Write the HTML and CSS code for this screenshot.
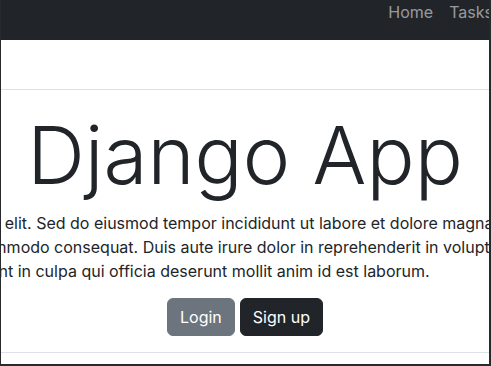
FILE: index.html
```html
<!DOCTYPE html>
<html lang="en">

<head>
    <meta charset="UTF-8">
    <meta name="viewport" content="width=device-width, initial-scale=1.0">
    <title>Django App</title>
    <link rel="stylesheet" href="styles.css">
</head>

<body>
    <div class="frame">
        <!-- top navigation -->
        <nav class="navbar">
            <ul class="nav-links">
                <li><a href="#" class="nav-link">Home</a></li>
                <li><a href="#" class="nav-link">Tasks</a></li>
            </ul>
        </nav>

        <div class="subbar"></div>

        <!-- hero -->
        <section class="hero">
            <h1 class="hero-title">Django App</h1>
            <p class="hero-text">Lorem ipsum dolor sit amet, consectetur adipiscing elit. Sed do eiusmod tempor incididunt ut labore et dolore magna aliqua. Ut enim ad minim veniam, quis nostrud exercitation ullamco laboris nisi ut aliquip ex ea commodo consequat. Duis aute irure dolor in reprehenderit in voluptate velit esse cillum dolore eu fugiat nulla pariatur. Excepteur sint occaecat cupidatat non proident, sunt in culpa qui officia deserunt mollit anim id est laborum.</p>
            <div class="hero-buttons">
                <a href="#" class="btn btn-secondary">Login</a>
                <a href="#" class="btn btn-dark">Sign up</a>
            </div>
        </section>
    </div>
</body>

</html>
```

FILE: styles.css
```css
  body {
      margin: 0;
      font-family: "Inter", "Liberation Sans", sans-serif;
      font-size: 16px;
      line-height: 1.5;
      color: #212529;
      background-color: #fff;
  }

.frame {
      box-sizing: border-box;
      height: 100vh;
      overflow: hidden;
      border-left: 1px solid #27292b;
      border-right: 2px solid #27292b;
      border-bottom: 2px solid #27292b;
  }

.navbar {
      height: 40px;
      background-color: #212529;
      display: flex;
      justify-content: flex-end;
      align-items: flex-start;
  }

.nav-links {
      list-style: none;
      display: flex;
      margin: 0 -12px 0 0;
      padding: 0;
  }

.nav-link {
      display: block;
      padding: 0 8px;
      color: rgba(255, 255, 255, 0.55);
      text-decoration: none;
  }

.subbar {
      height: 49px;
      border-bottom: 1px solid #dee2e6;
  }

.hero {
      display: flex;
      flex-direction: column;
      align-items: center;
      padding: 17px 0 16px;
      border-bottom: 1px solid #dee2e6;
  }

.hero-title {
      margin: 0 0 8px;
      font-size: 80px;
      font-weight: 300;
      line-height: 1.2;
  }

.hero-text {
      flex-shrink: 0;
      width: 1262px;
      margin: 0 0 15px;
      text-align: left;
  }

.hero-buttons {
      display: flex;
      gap: 5px;
  }

.btn {
      display: inline-block;
      padding: 6px 12px;
      border: 1px solid transparent;
      border-radius: 6px;
      color: #fff;
      text-decoration: none;
      line-height: 24px;
  }

.btn-secondary {
      background-color: #6c757d;
      border-color: #6c757d;
  }

.btn-dark {
      background-color: #212529;
      border-color: #212529;
  }
```
